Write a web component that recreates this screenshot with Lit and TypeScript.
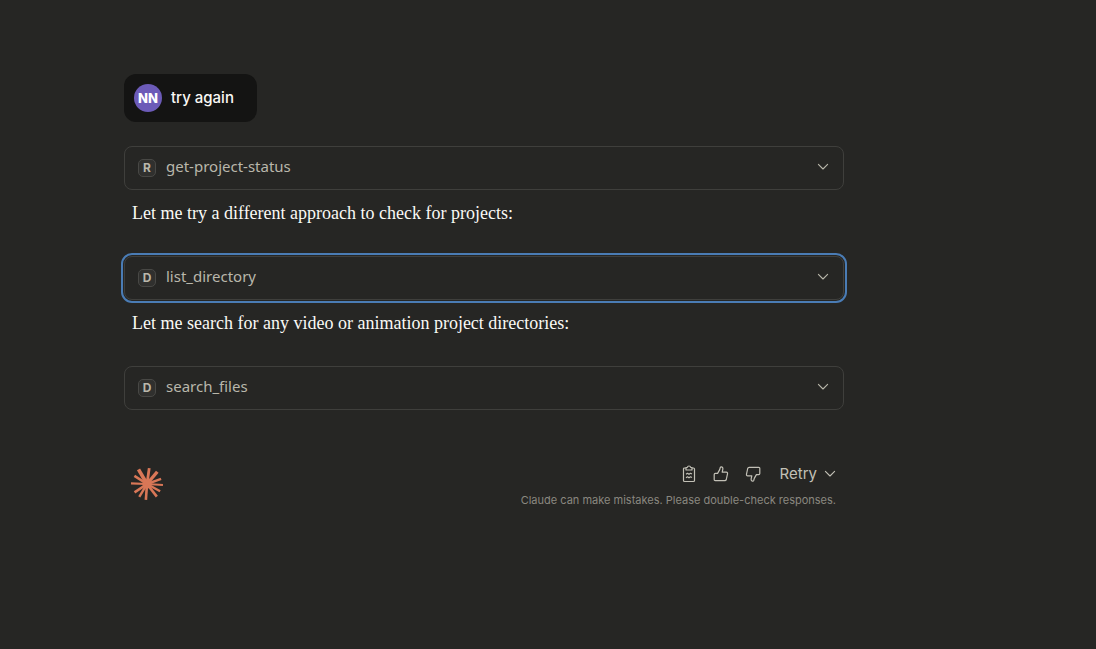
import { LitElement, html, css, svg } from "lit";
import { customElement, property } from "lit/decorators.js";

const chevron = html`<svg width="12" height="8" viewBox="0 0 12 8" aria-hidden="true">
  <path d="M1.4 1.4 6 6 10.6 1.4" fill="none" stroke="currentColor" stroke-width="1.1" stroke-linecap="round" stroke-linejoin="round" />
</svg>`;

const thumb = svg`<path d="M4.6 7.4 6.7 3.6 7.3 1.5Q7.6.7 8.5.8 10 1 9.9 2.8L9.2 6.1H13.3Q14.8 6.3 14.5 7.8L13.3 13.5Q13 14.7 11.8 14.7H2.3Q1.2 14.7 1.2 13.6V8.5Q1.2 7.4 2.3 7.4Z"
  fill="none" stroke="currentColor" stroke-width="1.2" stroke-linejoin="round" />`;

/* Angle in degrees, length, stroke width of each ray of the burst. */
const rays: [number, number, number][] = [
  [4, 16, 2], [29, 15, 2.4], [52, 16, 2.6], [94, 16, 2.6], [121, 15, 2.4], [146, 15, 2.6],
  [182, 16, 2.2], [213, 15, 2.6], [240, 17, 3.6], [278, 16, 2.8], [310, 16, 3.4], [340, 15, 2.4],
];

@customElement("tool-call")
export class ToolCall extends LitElement {
  @property() badge = "";
  @property() name = "";
  @property({ type: Boolean }) active = false;

  static styles = css`
    :host { display: block; }
    .card {
      display: flex;
      align-items: center;
      gap: 10px;
      width: 100%;
      height: 44px;
      box-sizing: border-box;
      padding: 0 14px 2px 13px;
      border: 1px solid #3f3f3c;
      border-radius: 8px;
      background: transparent;
      color: #b9b7ab;
      font: 400 15px/20px "Noto Sans", sans-serif;
      text-align: left;
    }
    .active { outline: 2px solid #4a7cb5; outline-offset: 1px; }
    .badge {
      display: flex;
      align-items: center;
      justify-content: center;
      width: 18px;
      height: 18px;
      box-sizing: border-box;
      margin-top: 2px;
      border: 1px solid #484845;
      border-radius: 5px;
      background: #30302e;
      font: 700 12px/16px Inter, sans-serif;
    }
    .name { flex: 1; padding-bottom: 2px; }
  `;

  render() {
    return html`<button class="card ${this.active ? "active" : ""}">
      <span class="badge">${this.badge}</span>
      <span class="name">${this.name}</span>
      ${chevron}
    </button>`;
  }
}

@customElement("app-root")
export class AppRoot extends LitElement {
  static styles = css`
    :host {
      display: block;
      min-height: 100vh;
      box-sizing: border-box;
      padding: 74px 124px;
      background: #262624;
      color: #faf9f5;
      font-family: Inter, sans-serif;
    }
    main { max-width: 720px; }
    .bubble {
      display: flex;
      align-items: center;
      gap: 9px;
      width: fit-content;
      height: 48px;
      box-sizing: border-box;
      padding: 0 23px 0 10px;
      margin-bottom: 24px;
      border-radius: 12px;
      background: #141413;
      font: 500 15px/24px Inter, sans-serif;
    }
    .avatar {
      display: grid;
      place-items: center;
      width: 28px;
      height: 28px;
      border-radius: 50%;
      background: #6c5bb8;
      color: #fff;
      font: 800 13px/16px Inter, sans-serif;
    }
    .prose {
      margin: 10px 8px 29px;
      font: 18px/27px "Liberation Serif", serif;
    }
    .footer {
      display: flex;
      justify-content: space-between;
      align-items: flex-start;
      padding: 54px 8px 0 6px;
    }
    .logo { display: block; margin-top: 3px; }
    .side { display: flex; flex-direction: column; align-items: flex-end; gap: 8px; }
    .actions { display: flex; align-items: center; gap: 16px; color: #c2c0b6; }
    .actions button {
      display: flex;
      align-items: center;
      gap: 7px;
      padding: 0;
      border: 0;
      background: none;
      color: inherit;
      font: 15px/20px Inter, sans-serif;
    }
    .actions .retry { margin-left: 3px; }
    .note { margin: 0; color: #8a8880; font: 11px/16px Inter, sans-serif; }
  `;

  render() {
    return html`<main>
      <div class="bubble"><span class="avatar">NN</span><span>try again</span></div>
      <tool-call badge="R" name="get-project-status"></tool-call>
      <p class="prose">Let me try a different approach to check for projects:</p>
      <tool-call badge="D" name="list_directory" active></tool-call>
      <p class="prose">Let me search for any video or animation project directories:</p>
      <tool-call badge="D" name="search_files"></tool-call>
      <div class="footer">
        <svg class="logo" width="34" height="34" viewBox="-17 -17 34 34" aria-hidden="true">
          <circle r="4.5" fill="#d97757" />
          ${rays.map(([a, len, w]) => svg`<line x1="0" y1="0" x2=${len} y2="0" transform="rotate(${a})" stroke="#d97757" stroke-width=${w} />`)}
        </svg>
        <div class="side">
          <div class="actions">
            <button aria-label="Copy">
              <svg width="16" height="18" viewBox="0 0 16 18" fill="none" stroke="currentColor" stroke-width="1.2" stroke-linejoin="round">
                <path d="M5 3H3.5Q2.5 3 2.5 4V15.5Q2.5 16.5 3.5 16.5H12.5Q13.5 16.5 13.5 15.5V4Q13.5 3 12.5 3H11" />
                <path d="M5 2.5H6.3Q6.6 1 8 1T9.7 2.5H11V5H5Z" />
                <path d="M5 9.3 6.5 8.3 8 9.3 9.5 8.3 11 9M5 12.8 6.5 11.8 8 12.8 9.5 11.8 11 12.5" />
              </svg>
            </button>
            <button aria-label="Good response"><svg width="16" height="16" viewBox="0 0 16 16">${thumb}</svg></button>
            <button aria-label="Bad response"><svg width="16" height="16" viewBox="0 0 16 16"><g transform="rotate(180 8 8)">${thumb}</g></svg></button>
            <button class="retry">Retry ${chevron}</button>
          </div>
          <p class="note">Claude can make mistakes. Please double-check responses.</p>
        </div>
      </div>
    </main>`;
  }
}
